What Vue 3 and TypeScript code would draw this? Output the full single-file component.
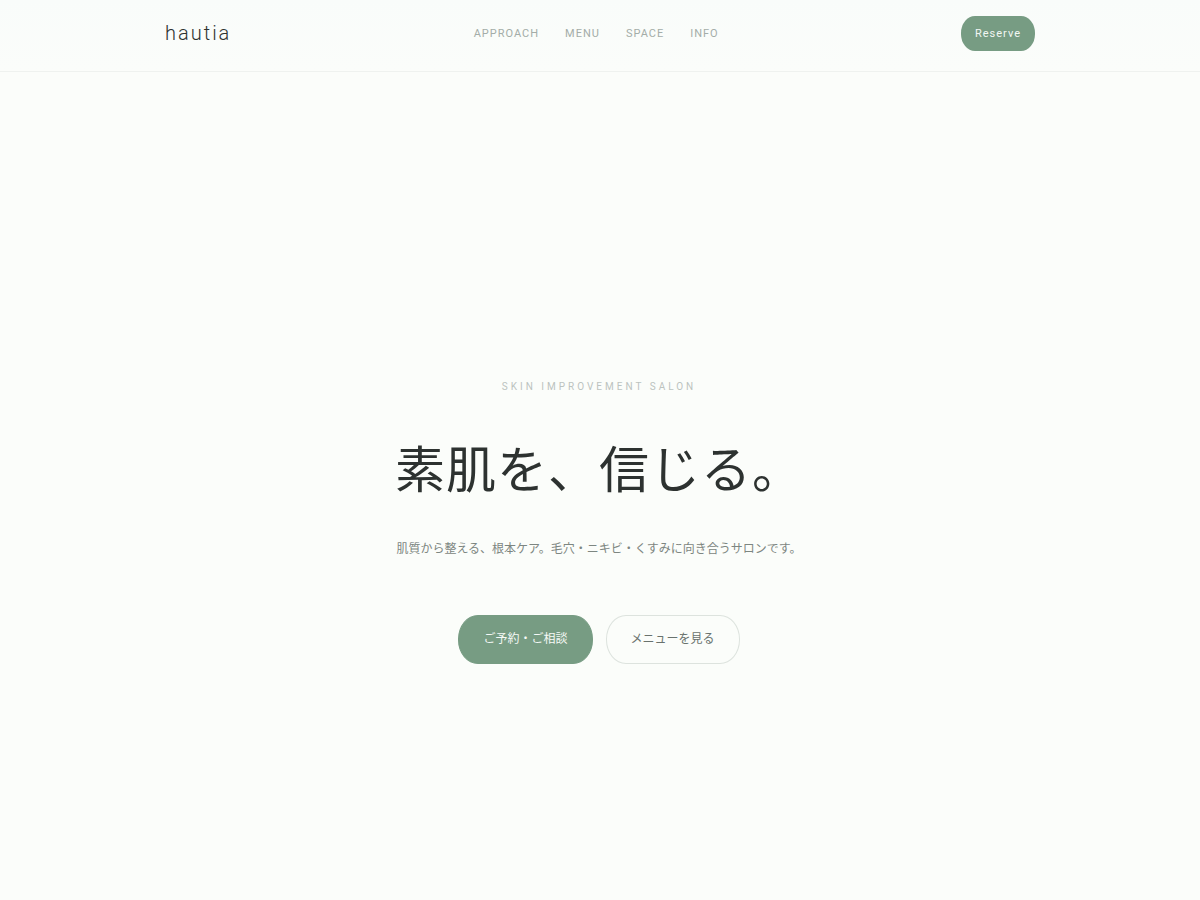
<script setup lang="ts">
interface NavItem {
  label: string
  href: string
}

const navItems: NavItem[] = [
  { label: 'APPROACH', href: '#approach' },
  { label: 'MENU', href: '#menu' },
  { label: 'SPACE', href: '#space' },
  { label: 'INFO', href: '#info' },
]
</script>

<template>
  <div class="page">
    <header class="header">
      <div class="header-inner">
        <a class="logo" href="#top">hautia</a>
        <nav class="nav" aria-label="メイン">
          <a v-for="item in navItems" :key="item.href" :href="item.href">{{ item.label }}</a>
        </nav>
        <a class="reserve" href="#reserve">Reserve</a>
      </div>
    </header>
    <main id="top" class="hero">
      <p class="eyebrow">SKIN IMPROVEMENT SALON</p>
      <h1 class="title">素肌を、信じる。</h1>
      <p class="lead">肌質から整える、根本ケア。毛穴・ニキビ・くすみに向き合うサロンです。</p>
      <div class="actions">
        <a class="button primary" href="#reserve">ご予約・ご相談</a>
        <a class="button outline" href="#menu">メニューを見る</a>
      </div>
    </main>
  </div>
</template>

<style>
body {
  background: #fbfdfa;
}
</style>

<style scoped>
.page {
  display: flex;
  flex-direction: column;
  min-height: 100vh;
  background: #fbfdfa;
  color: #2d3230;
  font-family: Roboto, "Noto Sans CJK JP", sans-serif;
}

a {
  color: inherit;
  text-decoration: none;
}

.header {
  padding: 15px 24px 20px;
  border-bottom: 1px solid #eff2ef;
  background: linear-gradient(#f9fcfa, #fbfdfa);
}

.header-inner {
  display: flex;
  align-items: center;
  justify-content: space-between;
  max-width: 870px;
  margin: 0 auto;
}

.logo {
  font-size: 20px;
  font-weight: 300;
  letter-spacing: 2px;
  line-height: 36px;
}

.nav {
  display: flex;
  gap: 26px;
  color: #a4ada8;
  font-size: 11px;
  letter-spacing: 1px;
}

.reserve {
  padding: 0 14px;
  border-radius: 14px / 17px;
  background: #779c83;
  color: #f2f7f3;
  font-size: 11px;
  letter-spacing: 1px;
  line-height: 35px;
}

.hero {
  display: flex;
  flex: 1;
  flex-direction: column;
  align-items: center;
  justify-content: center;
  padding: 70px 26px 0 24px;
  text-align: center;
}

.eyebrow {
  margin: 0;
  color: #bcc3bf;
  font-size: 10px;
  letter-spacing: 3px;
  line-height: 16px;
}

.title {
  margin: 40px 0 30px;
  font-size: 50px;
  font-weight: 400;
  letter-spacing: 1px;
  line-height: 72px;
}

.lead {
  margin: 0;
  color: #7d8681;
  font-size: 12px;
  line-height: 24px;
}

.actions {
  display: flex;
  flex-wrap: wrap;
  justify-content: center;
  gap: 13px;
  margin-top: 54px;
}

.button {
  padding: 0 24px;
  border: 1px solid #779c83;
  border-radius: 20px / 24px;
  font-size: 12px;
  line-height: 47px;
}

.primary {
  background: #779c83;
  color: #f5f9f6;
}

.outline {
  border-color: #dde3de;
  color: #69726d;
}
</style>
